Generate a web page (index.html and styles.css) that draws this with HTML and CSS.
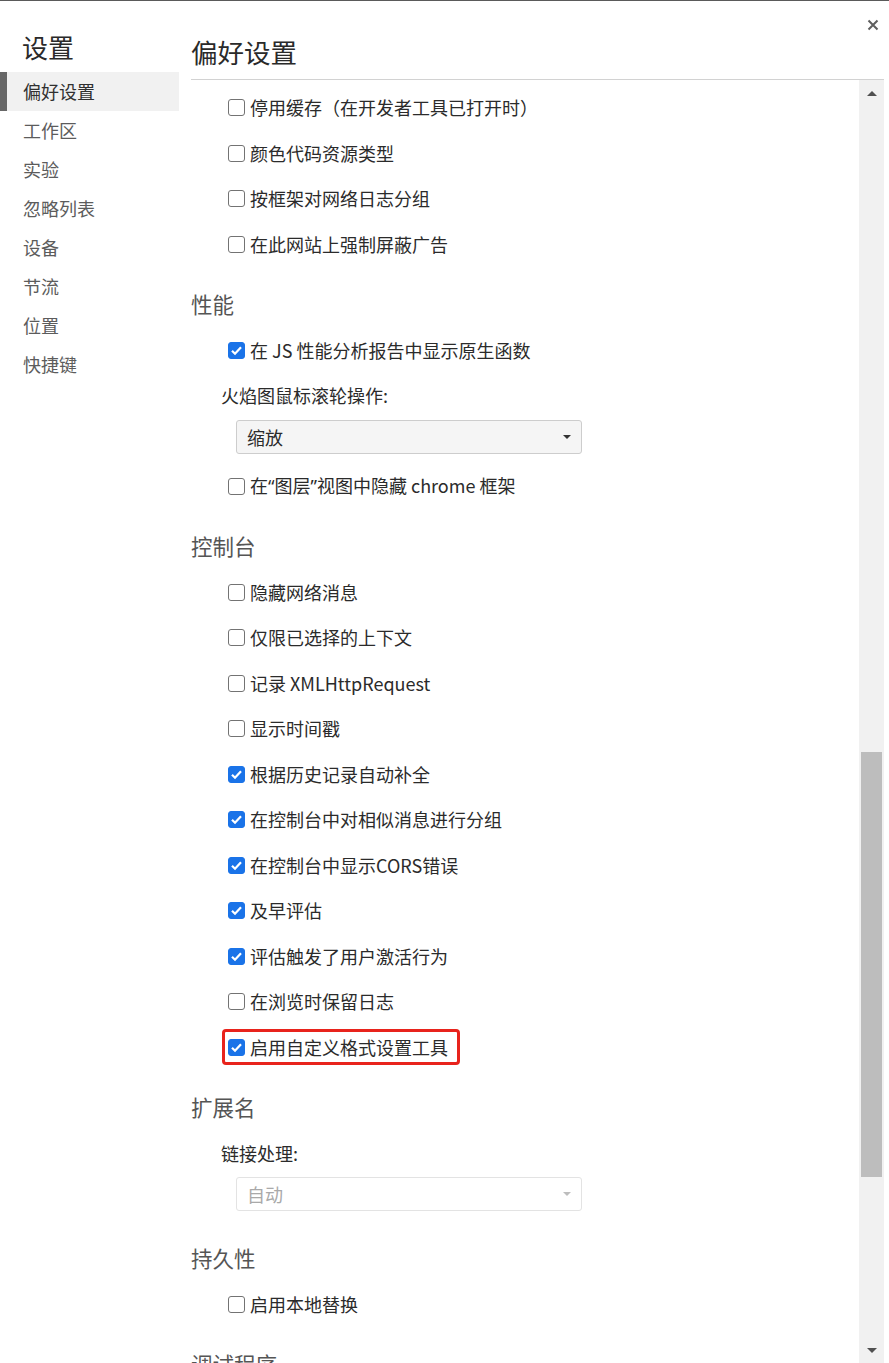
FILE: index.html
```html
<!DOCTYPE html>
<html lang="zh-CN">
<head>
<meta charset="utf-8">
<title>设置</title>
<link rel="stylesheet" href="styles.css">
</head>
<body>
<div class="window">
  <nav class="sidebar">
    <div class="side-title">设置</div>
    <div class="side-item selected">偏好设置</div>
    <div class="side-item">工作区</div>
    <div class="side-item">实验</div>
    <div class="side-item">忽略列表</div>
    <div class="side-item">设备</div>
    <div class="side-item">节流</div>
    <div class="side-item">位置</div>
    <div class="side-item">快捷键</div>
  </nav>
  <main class="main">
    <header class="header">
      <h1 class="title">偏好设置</h1>
      <div class="close" aria-label="关闭">
        <svg width="12" height="12" viewBox="0 0 12 12"><path d="M1.5 1.5 L10.5 10.5 M10.5 1.5 L1.5 10.5" stroke="#5f5f5f" stroke-width="2" fill="none"/></svg>
      </div>
    </header>
    <div class="scroller">
      <div class="content">
        <div class="row"><label class="cb"><span class="box"></span><span>停用缓存（在开发者工具已打开时）</span></label></div>
        <div class="row"><label class="cb"><span class="box"></span><span>颜色代码资源类型</span></label></div>
        <div class="row"><label class="cb"><span class="box"></span><span>按框架对网络日志分组</span></label></div>
        <div class="row"><label class="cb"><span class="box"></span><span>在此网站上强制屏蔽广告</span></label></div>

        <h2 class="section">性能</h2>
        <div class="row"><label class="cb"><span class="box checked"></span><span>在 JS 性能分析报告中显示原生函数</span></label></div>
        <div class="label-row">火焰图鼠标滚轮操作:</div>
        <div class="select-wrap"><div class="select"><span>缩放</span><span class="caret"></span></div></div>
        <div class="row"><label class="cb"><span class="box"></span><span>在<span class="q">“</span>图层<span class="q">”</span>视图中隐藏 chrome 框架</span></label></div>

        <h2 class="section">控制台</h2>
        <div class="row"><label class="cb"><span class="box"></span><span>隐藏网络消息</span></label></div>
        <div class="row"><label class="cb"><span class="box"></span><span>仅限已选择的上下文</span></label></div>
        <div class="row"><label class="cb"><span class="box"></span><span>记录 XMLHttpRequest</span></label></div>
        <div class="row"><label class="cb"><span class="box"></span><span>显示时间戳</span></label></div>
        <div class="row"><label class="cb"><span class="box checked"></span><span>根据历史记录自动补全</span></label></div>
        <div class="row"><label class="cb"><span class="box checked"></span><span>在控制台中对相似消息进行分组</span></label></div>
        <div class="row"><label class="cb"><span class="box checked"></span><span>在控制台中显示CORS错误</span></label></div>
        <div class="row"><label class="cb"><span class="box checked"></span><span>及早评估</span></label></div>
        <div class="row"><label class="cb"><span class="box checked"></span><span>评估触发了用户激活行为</span></label></div>
        <div class="row"><label class="cb"><span class="box"></span><span>在浏览时保留日志</span></label></div>
        <div class="row"><label class="cb highlight"><span class="box checked"></span><span>启用自定义格式设置工具</span></label></div>

        <h2 class="section">扩展名</h2>
        <div class="label-row">链接处理:</div>
        <div class="select-wrap"><div class="select disabled"><span>自动</span><span class="caret"></span></div></div>

        <h2 class="section">持久性</h2>
        <div class="row"><label class="cb"><span class="box"></span><span>启用本地替换</span></label></div>

        <h2 class="section">调试程序</h2>
      </div>
      <div class="scrollbar">
        <div class="sb-btn"><span class="tri-up"></span></div>
        <div class="sb-track"><div class="sb-thumb"></div></div>
        <div class="sb-btn"><span class="tri-down"></span></div>
      </div>
    </div>
  </main>
</div>
</body>
</html>
```

FILE: styles.css
```css
* { box-sizing: border-box; }

html, body {
  margin: 0;
  padding: 0;
  background: #fff;
}

body {
  font-family: "Noto Sans CJK SC", "Noto Sans", sans-serif;
  color: #333;
}

.window {
  display: flex;
  height: 100vh;
  overflow: hidden;
  border-top: 1px solid #5a5a5a;
}

/* Sidebar */
.sidebar {
  width: 179px;
  flex: none;
  display: flex;
  flex-direction: column;
}

.side-title {
  padding: 28px 0 0 22px;
  height: 71px;
  line-height: 36px;
  font-size: 26px;
  color: #2a2a2a;
}

.side-item {
  height: 39px;
  line-height: 38px;
  padding-left: 23px;
  font-size: 18px;
  color: #5c5c5c;
}

.side-item.selected {
  background: #f1f1f1;
  box-shadow: inset 7px 0 0 #676767;
  color: #303030;
}

/* Main */
.main {
  flex: 1;
  display: flex;
  flex-direction: column;
  padding-right: 5px;
  min-width: 0;
}

.header {
  margin-left: 12px;
  height: 79px;
  border-bottom: 1px solid #d2d2d2;
  display: flex;
  justify-content: space-between;
  align-items: flex-start;
}

.title {
  margin: 0;
  padding-top: 33px;
  font-size: 26.5px;
  line-height: 36px;
  font-weight: normal;
  color: #2a2a2a;
}

.close {
  margin-top: 18px;
  margin-right: 5px;
  width: 12px;
  height: 12px;
  display: flex;
}

.scroller {
  flex: 1;
  display: flex;
  min-height: 0;
  overflow: hidden;
}

.content {
  flex: 1;
  padding-top: 4.5px;
  margin-left: 12px;
  font-size: 18px;
}

.row {
  height: 45.5px;
  display: flex;
  align-items: center;
  padding-left: 37px;
}

.cb {
  position: relative;
  display: inline-flex;
  align-items: center;
  gap: 5px;
  line-height: 24px;
  color: #2b2b2b;
  white-space: nowrap;
}

.q {
  font-family: "Noto Sans", "Liberation Sans", sans-serif;
}

.box {
  width: 17px;
  height: 17px;
  border: 1.5px solid #737373;
  border-radius: 3px;
  background: #fff;
  flex: none;
  margin-top: 1px;
}

.box.checked {
  border-color: #1a73e8;
  background: #1a73e8 url("data:image/svg+xml,%3Csvg xmlns='http://www.w3.org/2000/svg' viewBox='0 0 16 16'%3E%3Cpath d='M3.2 8.3 L6.4 11.4 L12.8 4.6' fill='none' stroke='white' stroke-width='2.4'/%3E%3C/svg%3E") center / 15px 15px no-repeat;
}

.highlight::after {
  content: "";
  position: absolute;
  left: -6px;
  right: -12px;
  top: -6px;
  bottom: -6px;
  border: 3px solid #e8231c;
  border-radius: 4px;
}

.section {
  margin: 0;
  height: 60.5px;
  padding-top: 22px;
  line-height: 30px;
  font-size: 21.5px;
  font-weight: normal;
  color: #555;
}

.label-row {
  height: 45.5px;
  display: flex;
  align-items: center;
  padding-left: 30px;
  color: #2b2b2b;
}

.select-wrap {
  height: 45px;
  padding-top: 1.5px;
  padding-left: 45px;
}

.select {
  width: 346px;
  height: 34px;
  border: 1px solid #cdcdcd;
  border-radius: 3px;
  background: #f5f5f5;
  display: flex;
  align-items: center;
  justify-content: space-between;
  padding: 0 10px 0 10px;
  color: #2b2b2b;
}

.caret {
  width: 0;
  height: 0;
  border-left: 4.5px solid transparent;
  border-right: 4.5px solid transparent;
  border-top: 4.5px solid #333;
}

.select.disabled {
  background: #fff;
  border-color: #e3e3e3;
  color: #a9a9a9;
}

.select.disabled .caret {
  border-top-color: #bdbdbd;
}

/* Scrollbar */
.scrollbar {
  width: 25px;
  flex: none;
  background: #f1f1f1;
  display: flex;
  flex-direction: column;
}

.sb-btn {
  height: 26px;
  display: flex;
  align-items: center;
  justify-content: center;
  flex: none;
}

.tri-up {
  width: 0;
  height: 0;
  border-left: 5px solid transparent;
  border-right: 5px solid transparent;
  border-bottom: 5px solid #505050;
}

.tri-down {
  width: 0;
  height: 0;
  border-left: 5px solid transparent;
  border-right: 5px solid transparent;
  border-top: 5px solid #505050;
}

.sb-track {
  flex: 1;
  padding: 646px 2px 0 2px;
}

.sb-thumb {
  height: 425px;
  background: #bdbdbd;
}
```
